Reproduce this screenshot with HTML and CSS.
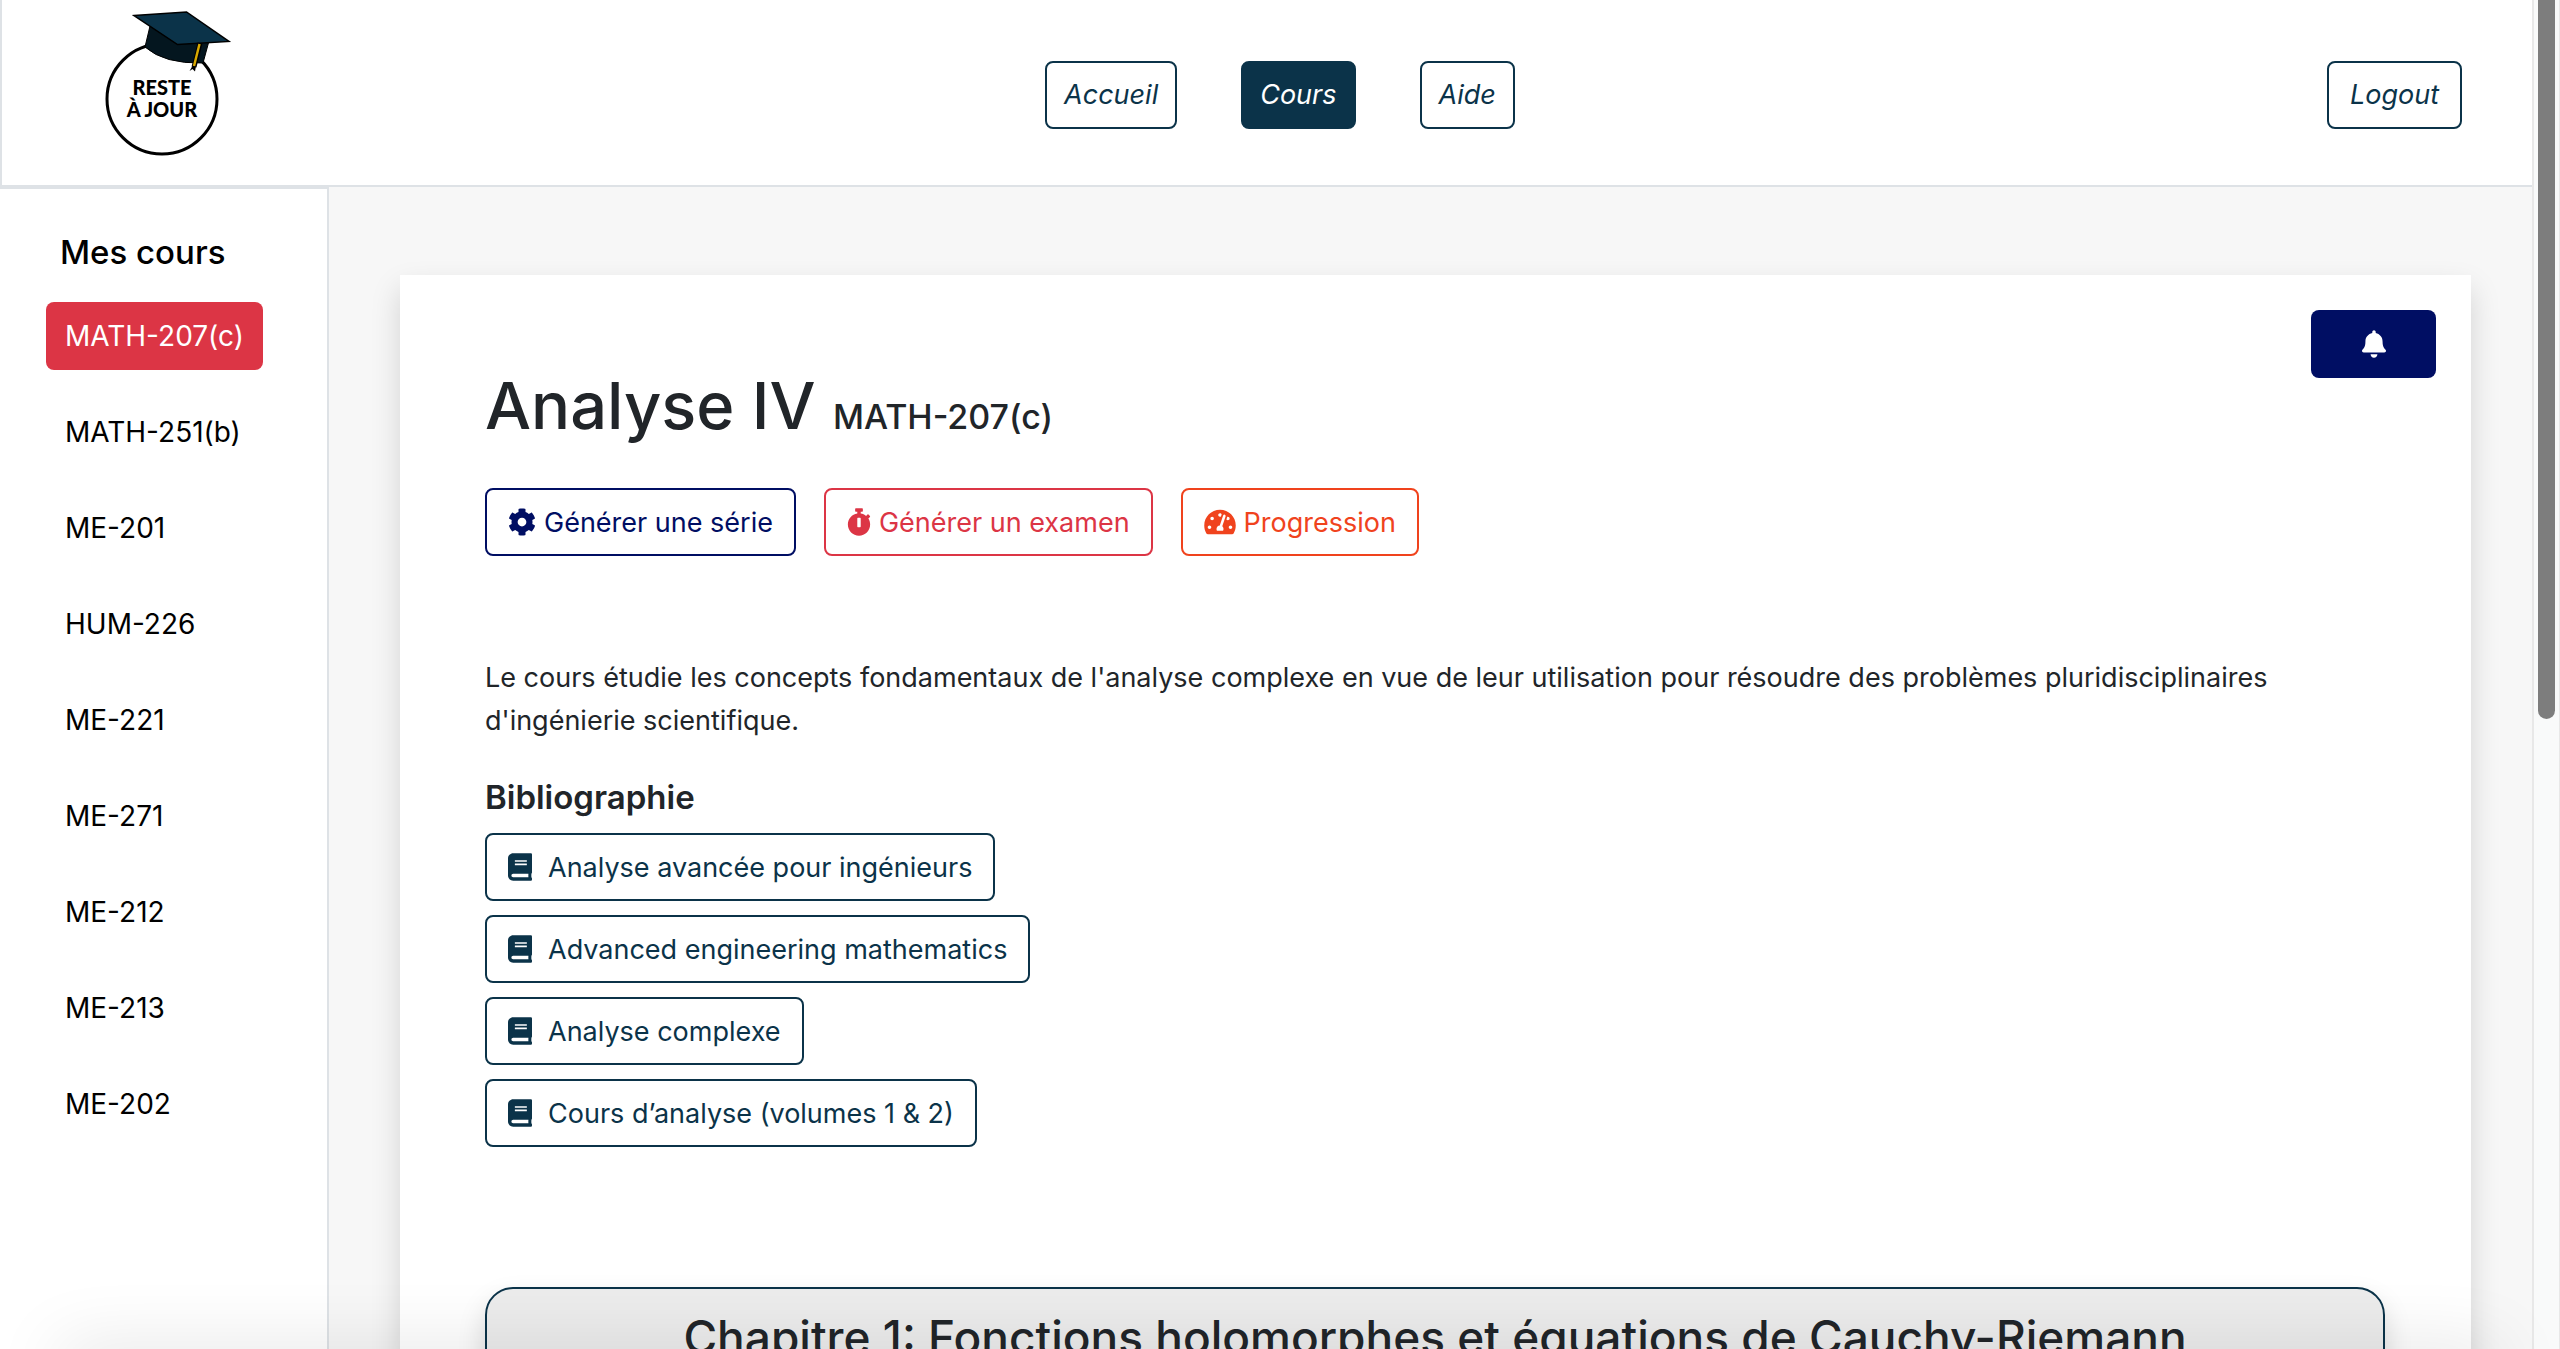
FILE: index.html
```html
<!DOCTYPE html>
<html lang="fr">
<head>
<meta charset="utf-8">
<meta name="viewport" content="width=device-width, initial-scale=1">
<title>Reste à jour – Analyse IV</title>
<link rel="stylesheet" href="styles.css">
</head>
<body>
<svg class="sprite" aria-hidden="true">
  <symbol id="bell" viewBox="0 0 448 512"><path d="M224 512c35.32 0 63.97-28.65 63.97-64H160.03c0 35.35 28.65 64 63.97 64zm215.39-149.71c-19.32-20.76-55.47-51.99-55.47-154.29 0-77.7-54.48-139.9-127.94-155.16V32c0-17.67-14.32-32-31.98-32s-31.98 14.33-31.98 32v20.84C118.56 68.1 64.08 130.3 64.08 208c0 102.3-36.15 133.53-55.47 154.29-6 6.45-8.66 14.16-8.61 21.71.11 16.4 12.98 32 32.1 32h383.8c19.12 0 32-15.6 32.1-32 .05-7.55-2.61-15.27-8.61-21.71z"/></symbol>
  <symbol id="cog" viewBox="0 0 512 512"><path d="M487.4 315.7l-42.6-24.6c4.3-23.2 4.3-47 0-70.2l42.6-24.6c4.9-2.8 7.1-8.6 5.5-14-11.1-35.6-30-67.8-54.7-94.6-3.8-4.1-10-5.1-14.8-2.3L380.8 110c-17.9-15.4-38.5-27.3-60.8-35.1V25.8c0-5.6-3.9-10.5-9.4-11.7-36.7-8.2-74.3-7.8-109.2 0-5.5 1.2-9.4 6.1-9.4 11.7V75c-22.2 7.9-42.8 19.8-60.8 35.1L88.7 85.5c-4.9-2.8-11-1.9-14.8 2.3-24.7 26.7-43.6 58.9-54.7 94.6-1.7 5.4.6 11.2 5.5 14L67.3 221c-4.3 23.2-4.3 47 0 70.2l-42.6 24.6c-4.9 2.8-7.1 8.6-5.5 14 11.1 35.6 30 67.8 54.7 94.6 3.8 4.1 10 5.1 14.8 2.3l42.6-24.6c17.9 15.4 38.5 27.3 60.8 35.1v49.2c0 5.6 3.9 10.5 9.4 11.7 36.7 8.2 74.3 7.8 109.2 0 5.5-1.2 9.4-6.1 9.4-11.7v-49.2c22.2-7.9 42.8-19.8 60.8-35.1l42.6 24.6c4.9 2.8 11 1.9 14.8-2.3 24.7-26.7 43.6-58.9 54.7-94.6 1.5-5.5-.7-11.3-5.6-14.1zM256 336c-44.1 0-80-35.9-80-80s35.9-80 80-80 80 35.9 80 80-35.9 80-80 80z"/></symbol>
  <symbol id="stopwatch" viewBox="0 0 448 512"><path d="M432 304c0 114.9-93.1 208-208 208S16 418.9 16 304c0-104 76.3-190.2 176-205.5V64h-28c-6.6 0-12-5.4-12-12V12c0-6.6 5.4-12 12-12h120c6.6 0 12 5.4 12 12v40c0 6.6-5.4 12-12 12h-28v34.5c37.5 5.8 71.7 21.6 99.7 44.6l27.5-27.5c4.7-4.7 12.3-4.7 17 0l28.3 28.3c4.7 4.7 4.7 12.3 0 17l-29.4 29.4-.6.6C419.7 223.3 432 262.2 432 304zm-176 36V188.5c0-6.6-5.4-12-12-12h-40c-6.6 0-12 5.4-12 12V340c0 6.6 5.4 12 12 12h40c6.6 0 12-5.4 12-12z"/></symbol>
  <symbol id="gauge" viewBox="0 0 576 512"><path d="M288 32C128.94 32 0 160.94 0 320c0 52.8 14.25 102.26 39.06 144.8 5.61 9.62 16.3 15.2 27.44 15.2h443c11.14 0 21.83-5.58 27.44-15.2C561.75 422.26 576 372.8 576 320c0-159.06-128.94-288-288-288zm0 64c14.71 0 26.58 10.13 30.32 23.65-1.11 2.26-2.64 4.23-3.45 6.67l-9.22 27.67c-5.13 3.49-10.97 6.01-17.64 6.01-17.67 0-32-14.33-32-32S270.33 96 288 96zM96 384c-17.67 0-32-14.33-32-32s14.33-32 32-32 32 14.33 32 32-14.33 32-32 32zm48-160c-17.67 0-32-14.33-32-32s14.33-32 32-32 32 14.33 32 32-14.33 32-32 32zm246.77-72.41l-61.33 184C343.13 347.33 352 364.54 352 384c0 11.72-3.38 22.55-8.88 32H232.88c-5.5-9.45-8.88-20.28-8.88-32 0-33.94 26.5-61.43 59.9-63.59l61.34-184.01c4.17-12.56 17.73-19.45 30.36-15.17 12.57 4.19 19.35 17.79 15.17 30.36zm14.66 57.2l15.52-46.55c3.47-1.29 7.13-2.23 11.05-2.23 17.67 0 32 14.33 32 32s-14.33 32-32 32c-11.38-.01-20.89-6.28-26.57-15.22zM480 384c-17.67 0-32-14.33-32-32s14.33-32 32-32 32 14.33 32 32-14.33 32-32 32z"/></symbol>
  <symbol id="book" viewBox="0 0 448 512"><path d="M448 360V24c0-13.3-10.7-24-24-24H96C43 0 0 43 0 96v320c0 53 43 96 96 96h328c13.3 0 24-10.7 24-24v-16c0-7.5-3.5-14.3-8.9-18.7-4.2-15.4-4.2-59.3 0-74.7 5.4-4.3 8.9-11.1 8.9-18.6zM128 134c0-3.3 2.7-6 6-6h212c3.3 0 6 2.7 6 6v20c0 3.3-2.7 6-6 6H134c-3.3 0-6-2.7-6-6v-20zm0 64c0-3.3 2.7-6 6-6h212c3.3 0 6 2.7 6 6v20c0 3.3-2.7 6-6 6H134c-3.3 0-6-2.7-6-6v-20zm253.4 250H96c-17.7 0-32-14.3-32-32 0-17.6 14.4-32 32-32h285.4c-1.9 17.1-1.9 46.9 0 64z"/></symbol>
</svg>

<div class="app">
  <header class="header">
    <a class="brand" href="#" aria-label="Reste à jour">
      <svg class="logo" viewBox="98 8 140 150" width="140" height="150">
        <circle cx="162" cy="99" r="55" fill="#fff" stroke="#000" stroke-width="3"/>
        <path d="M150 26L145 47Q164 64 203 63L209 41Z" fill="#04161f" stroke="#000" stroke-width="1"/>
        <path d="M134 15.500L186.500 12L229 41.500L177.500 44.500Z" fill="#0b3349" stroke="#000" stroke-width="1.500"/>
        <path d="M200 43L194 67" stroke="#000" stroke-width="5"/>
        <path d="M189.500 71L193 65L196 66L195 71.500L192.500 69Z" fill="#000"/>
        <path d="M199.500 44L194 66" stroke="#d9a900" stroke-width="2.500"/>
        <text class="logo-text" x="162" y="95">RESTE</text>
        <text class="logo-text" x="162" y="117">À JOUR</text>
      </svg>
    </a>
    <nav class="nav">
      <a class="btn btn-nav" href="#">Accueil</a>
      <a class="btn btn-nav active" href="#" aria-current="page">Cours</a>
      <a class="btn btn-nav" href="#">Aide</a>
    </nav>
    <button class="btn btn-nav logout" type="button">Logout</button>
  </header>

  <div class="body">
    <aside class="sidebar">
      <h2 class="sidebar-title">Mes cours</h2>
      <nav class="courses">
        <a class="course active" href="#">MATH-207(c)</a>
        <a class="course" href="#">MATH-251(b)</a>
        <a class="course" href="#">ME-201</a>
        <a class="course" href="#">HUM-226</a>
        <a class="course" href="#">ME-221</a>
        <a class="course" href="#">ME-271</a>
        <a class="course" href="#">ME-212</a>
        <a class="course" href="#">ME-213</a>
        <a class="course" href="#">ME-202</a>
      </nav>
    </aside>

    <main class="main">
      <article class="card">
        <button class="btn bell" type="button" aria-label="Notifications"><svg class="icon icon-narrow"><use href="#bell"/></svg></button>
        <h1 class="title">Analyse IV <small class="code">MATH-207(c)</small></h1>
        <div class="actions">
          <button class="btn blue" type="button"><svg class="icon"><use href="#cog"/></svg>Générer une série</button>
          <button class="btn red" type="button"><svg class="icon icon-narrow"><use href="#stopwatch"/></svg>Générer un examen</button>
          <button class="btn orange" type="button"><svg class="icon icon-wide"><use href="#gauge"/></svg>Progression</button>
        </div>
        <p class="intro">Le cours étudie les concepts fondamentaux de l'analyse complexe en vue de leur utilisation pour résoudre des problèmes pluridisciplinaires d'ingénierie scientifique.</p>
        <h2 class="subtitle">Bibliographie</h2>
        <div class="books">
          <a class="btn book" href="#"><svg class="icon icon-narrow"><use href="#book"/></svg>Analyse avancée pour ingénieurs</a>
          <a class="btn book" href="#"><svg class="icon icon-narrow"><use href="#book"/></svg>Advanced engineering mathematics</a>
          <a class="btn book" href="#"><svg class="icon icon-narrow"><use href="#book"/></svg>Analyse complexe</a>
          <a class="btn book" href="#"><svg class="icon icon-narrow"><use href="#book"/></svg>Cours d’analyse (volumes 1 &amp; 2)</a>
        </div>
        <section class="chapter">
          <h2 class="chapter-title">Chapitre 1: Fonctions holomorphes et équations de Cauchy-Riemann</h2>
        </section>
      </article>
    </main>
  </div>
</div>
<div class="scrollbar" aria-hidden="true"><div class="thumb"></div></div>
<div class="fade" aria-hidden="true"></div>
</body>
</html>
```
FILE: styles.css
```css
* {
  box-sizing: border-box;
}

body {
  display: flex;
  height: 100vh;
  margin: 0;
  overflow: hidden;
  background: #f7f7f7;
  color: #212529;
  font: 400 27px/43px Inter, "Liberation Sans", sans-serif;
}

h1, h2, p {
  margin: 0;
}

.sprite {
  position: absolute;
  width: 0;
  height: 0;
}

.app {
  display: flex;
  flex: 1;
  flex-direction: column;
  min-width: 0;
}

/* Buttons */
.btn {
  display: inline-flex;
  align-items: center;
  justify-content: center;
  gap: 8px;
  height: 68px;
  padding: 0 21px;
  border: 2px solid currentColor;
  border-radius: 8px;
  background: #fff;
  color: #0b3349;
  font: inherit;
  text-decoration: none;
  white-space: nowrap;
}

.btn-nav {
  padding: 0 17px;
  font-style: italic;
}

.btn-nav.active {
  border-color: #0b3349;
  background: #0b3349;
  color: #fff;
}

.icon {
  width: 28px;
  height: 28px;
  fill: currentColor;
}

.icon-narrow {
  width: 24px;
}

.icon-wide {
  width: 32px;
}

/* Header */
.header {
  display: grid;
  flex: none;
  grid-template-columns: 1fr auto 1fr;
  align-items: center;
  height: 187px;
  padding: 4px 70px 0 96px;
  border: solid #dee2e6;
  border-width: 0 0 2px 2px;
  background: #fff;
}

.brand {
  align-self: start;
  justify-self: start;
  padding-top: 4px;
}

.logo {
  display: block;
}

.logo-text {
  font: 900 20px Lato, sans-serif;
  text-anchor: middle;
}

.nav {
  display: flex;
  gap: 64px;
}

.logout {
  justify-self: end;
  padding: 0 21px;
}

/* Layout */
.body {
  display: flex;
  flex: 1;
  min-height: 0;
}

.sidebar {
  flex: none;
  width: 329px;
  padding: 42px 46px;
  border: solid #dee2e6;
  border-width: 2px 2px 0 0;
  background: #fff;
  color: #000;
}

.sidebar-title {
  padding-left: 14px;
  font-size: 33px;
  font-weight: 500;
  line-height: 43px;
}

.courses {
  display: flex;
  flex-direction: column;
  align-items: flex-start;
  gap: 28px;
  margin-top: 28px;
  font-size: 28px;
}

.course {
  padding: 13px 19px 12px;
  border-radius: 8px;
  color: inherit;
  text-decoration: none;
}

.course.active {
  background: #dc3545;
  color: #fff;
}

.main {
  flex: 1;
  min-width: 0;
  padding: 88px 61px 0 71px;
  overflow: hidden;
}

.card {
  position: relative;
  height: 1600px;
  padding: 88px 86px 88px 85px;
  background: #fff;
  box-shadow: 0 14px 28px rgba(0, 0, 0, .15);
}

.bell {
  position: absolute;
  top: 35px;
  right: 35px;
  width: 125px;
  border: 0;
  background: #000e63;
  color: #fff;
}

.title {
  font-size: 65px;
  font-weight: 500;
  line-height: 86px;
}

.code {
  font-size: 34px;
  font-weight: 500;
}

.actions {
  display: flex;
  gap: 28px;
  margin-top: 28px;
}

.blue {
  color: #000e63;
}

.red {
  color: #dc3545;
}

.orange {
  color: #f0431d;
}

.intro {
  margin-top: 100px;
}

.subtitle {
  margin-top: 34px;
  font-size: 33px;
  font-weight: 600;
}

.books {
  display: flex;
  flex-direction: column;
  align-items: flex-start;
  gap: 14px;
  margin-top: 14px;
}

.book {
  gap: 16px;
}

.chapter {
  height: 600px;
  margin-top: 140px;
  padding: 21px;
  border: 2px solid #0b3349;
  border-radius: 28px;
  background: #ececec;
  box-shadow: 0 14px 28px rgba(0, 0, 0, .15);
}

.chapter-title {
  font-size: 46px;
  font-weight: 500;
  line-height: 54px;
  text-align: center;
}

/* Page scroll track */
.scrollbar {
  flex: none;
  width: 28px;
  padding: 0 4px;
  border: solid #e8e8e8;
  border-width: 0 1px 0 2px;
  background: #f9fafa;
}

.thumb {
  height: 54vh;
  margin-top: -9px;
  border-radius: 0 0 10px 10px;
  background: #7d7d7d;
}

/* Soft shade along the bottom edge of the window */
.fade {
  position: fixed;
  right: 60px;
  bottom: -40px;
  left: 60px;
  height: 40px;
  box-shadow: 0 0 70px rgba(0, 0, 0, .13);
  pointer-events: none;
}
```
